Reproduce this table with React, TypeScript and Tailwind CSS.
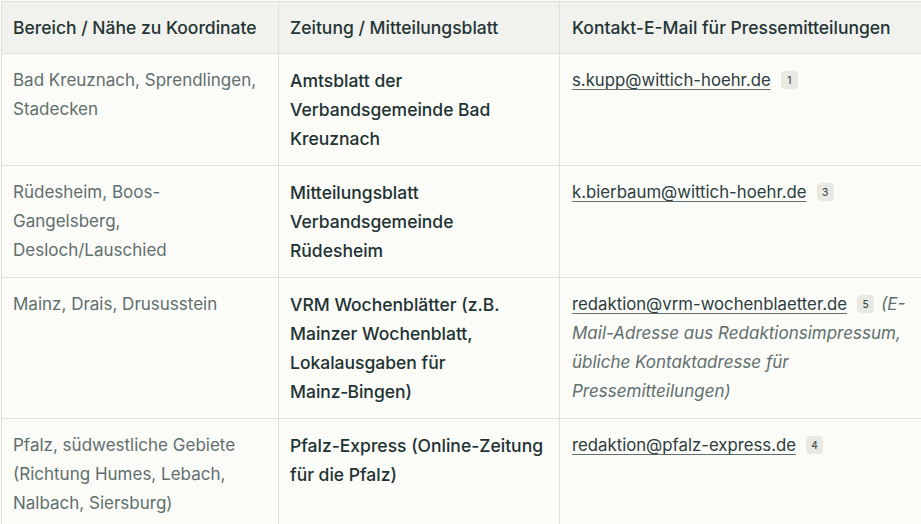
const rows = [
  {
    area: "Bad Kreuznach, Sprendlingen, Stadecken",
    paper: "Amtsblatt der Verbandsgemeinde Bad Kreuznach",
    email: "s.kupp@wittich-hoehr.de",
    cite: "1",
    note: "",
  },
  {
    area: "Rüdesheim, Boos-Gangelsberg, Desloch/Lauschied",
    paper: "Mitteilungsblatt Verbandsgemeinde Rüdesheim",
    email: "k.bierbaum@wittich-hoehr.de",
    cite: "3",
    note: "",
  },
  {
    area: "Mainz, Drais, Drususstein",
    paper: "VRM Wochenblätter (z.B. Mainzer Wochenblatt, Lokalausgaben für Mainz\u2011Bingen)",
    email: "redaktion@vrm-wochenblaetter.de",
    cite: "5",
    note: "(E-Mail-Adresse aus Redaktionsimpressum, übliche Kontaktadresse für Pressemitteilungen)",
  },
  {
    area: "Pfalz, südwestliche Gebiete (Richtung Humes, Lebach, Nalbach, Siersburg)",
    paper: "Pfalz-Express (Online-Zeitung für die Pfalz)",
    email: "redaktion@pfalz-express.de",
    cite: "4",
    note: "",
  },
];

function Cite({ n }: { n: string }) {
  return (
    <span className="ml-[10px] mr-[7px] inline-flex h-[18px] min-w-[17px] items-center justify-center rounded-[4px] bg-[#e9e9e4] px-[5px] align-[2px] text-[10px] font-medium leading-none text-[#3d4a4a]">
      {n}
    </span>
  );
}

export default function App() {
  return (
    <div className="h-[524px] w-[921px] overflow-hidden bg-[#fbfbf8] pl-px pt-px font-['Inter',sans-serif]">
      <table className="w-[922px] table-fixed border-collapse text-[17.5px] leading-[29px]">
        <colgroup>
          <col className="w-[277px]" />
          <col className="w-[281px]" />
          <col />
        </colgroup>
        <thead>
          <tr className="bg-[#f1f1ed]">
            <th className="border border-[#e0e0da] px-[11px] py-[11px] text-left font-medium text-[#253535]">
              Bereich / Nähe zu Koordinate
            </th>
            <th className="border border-[#e0e0da] px-[11px] py-[11px] text-left font-medium text-[#253535]">
              Zeitung / Mitteilungsblatt
            </th>
            <th className="border border-[#e0e0da] px-[12px] py-[11px] text-left font-medium text-[#253535]">
              Kontakt-E-Mail für Pressemitteilungen
            </th>
          </tr>
        </thead>
        <tbody>
          {rows.map((r) => (
            <tr key={r.email} className="align-top">
              <td className="border border-[#e0e0da] px-[11px] py-[12px] text-[17px] text-[#5f6f6e]">{r.area}</td>
              <td className="border border-[#e0e0da] px-[11px] py-[12px] font-medium text-[#213232]">
                {r.paper}
              </td>
              <td className="border border-[#e0e0da] py-[12px] pl-[12px] pr-[8px] text-[17px] text-[#5f6f6e]">
                <a className="text-[16.75px] text-[#2b3d3d] underline decoration-[#5f6f6e] underline-offset-[3px]">
                  {r.email}
                </a>
                <Cite n={r.cite} />
                {r.note && <span className="italic">{r.note}</span>}
              </td>
            </tr>
          ))}
        </tbody>
      </table>
    </div>
  );
}
